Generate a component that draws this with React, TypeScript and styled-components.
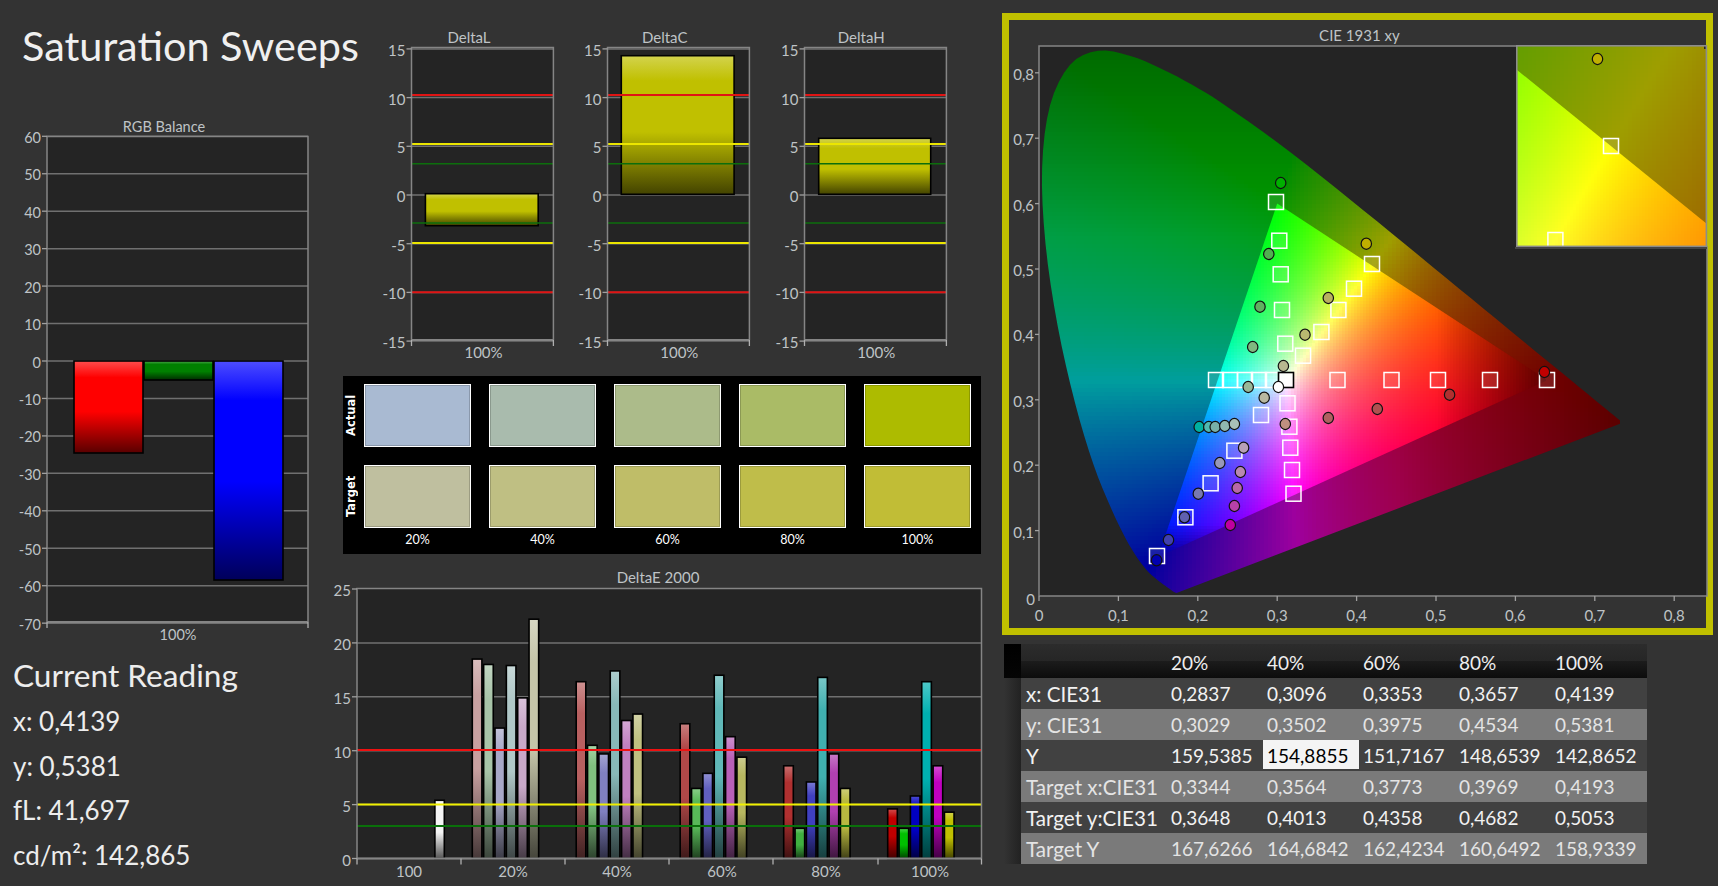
import React from 'react';
import styled, {createGlobalStyle} from 'styled-components';

const GlobalStyle = createGlobalStyle`
  html, body {
    margin: 0;
    padding: 0;
    background: #333333;
  }
  body {
    font-family: Lato, "Open Sans", sans-serif;
    color: #eeeeee;
  }
`;

// colour helpers
const mix = (hex: string, target: string, t: number) => {
  const parse = (h: string) => [1, 3, 5].map(i => parseInt(h.slice(i, i + 2), 16));
  const a = parse(hex);
  const b = parse(target);
  const out = a.map((v, i) => Math.round(v + (b[i] - v) * t));
  return `rgb(${out.join(',')})`;
};

const barStops = (color: string): [number, string][] => [
  [0, mix(color, '#ffffff', 0.3)],
  [0.18, color],
  [0.55, color],
  [1, mix(color, '#000000', 0.65)],
];

type Bar = {x0: number; x1: number; y0: number; y1: number; color: string};
type Line = {y: number; color: string; width?: number};

type ChartProps = {
  id: string;
  frame: [number, number, number, number];
  plot: {left: number; right: number; top: number; bottom: number};
  title: string;
  titleAt: [number, number];
  yTicks: {label: string; y: number}[];
  xLabels: {label: string; x: number}[];
  xTicks: number[];
  xLabelY: number;
  grid: number[];
  bars: Bar[];
  limits?: Line[];
  size: number;
};

const Chart = ({
  id,
  frame,
  plot,
  title,
  titleAt,
  yTicks,
  xLabels,
  xTicks,
  xLabelY,
  grid,
  bars,
  limits = [],
  size,
}: ChartProps) => (
  <ChartSvg
    width={frame[2]}
    height={frame[3]}
    viewBox={frame.join(' ')}
    style={{fontSize: size}}
  >
    <defs>
      {bars.map((bar, i) => (
        <linearGradient id={`${id}-${i}`} key={i} x1="0" y1="0" x2="0" y2="1">
          {barStops(bar.color).map(([offset, color]) => (
            <stop key={offset} offset={offset} stopColor={color} />
          ))}
        </linearGradient>
      ))}
    </defs>
    <text x={titleAt[0]} y={titleAt[1]} textAnchor="middle" dominantBaseline="central">
      {title}
    </text>
    <rect
      x={plot.left}
      y={plot.top}
      width={plot.right - plot.left}
      height={plot.bottom - plot.top}
      fill="#242424"
    />
    {grid.map(y => (
      <line key={y} x1={plot.left} x2={plot.right} y1={y} y2={y} stroke="#707070" strokeWidth="1.5" />
    ))}
    {bars.map((bar, i) => (
      <rect
        key={i}
        x={bar.x0}
        y={bar.y0}
        width={bar.x1 - bar.x0}
        height={bar.y1 - bar.y0}
        fill={`url(#${id}-${i})`}
        stroke="#000000"
        strokeWidth="1.6"
      />
    ))}
    {limits.map(line => (
      <line
        key={line.y}
        x1={plot.left}
        x2={plot.right}
        y1={line.y}
        y2={line.y}
        stroke={line.color}
        strokeWidth={line.width ?? 2}
      />
    ))}
    <path
      d={`M${plot.left} ${plot.bottom}V${plot.top}H${plot.right}V${plot.bottom}`}
      fill="none"
      stroke="#858585"
      strokeWidth="1.5"
    />
    <line x1={plot.left} x2={plot.right} y1={plot.bottom} y2={plot.bottom} stroke="#858585" strokeWidth="2" />
    {yTicks.map(tick => (
      <g key={tick.label}>
        <line x1={plot.left - 5} x2={plot.left} y1={tick.y} y2={tick.y} stroke="#a0a0a0" strokeWidth="1.3" />
        <text x={plot.left - 6} y={tick.y + 1} textAnchor="end" dominantBaseline="central">
          {tick.label}
        </text>
      </g>
    ))}
    {xTicks.map(x => (
      <line key={x} x1={x} x2={x} y1={plot.bottom} y2={plot.bottom + 6} stroke="#b0b0b0" strokeWidth="1.3" />
    ))}
    {xLabels.map(item => (
      <text key={item.x} x={item.x} y={xLabelY} textAnchor="middle" dominantBaseline="central">
        {item.label}
      </text>
    ))}
  </ChartSvg>
);

// RGB balance
const rgbY = (v: number) => 361 - v * 3.745;
const rgbTicks = [60, 50, 40, 30, 20, 10, 0, -10, -20, -30, -40, -50, -60, -70];

// Delta L/C/H
const deltaY = (v: number) => 195 - v * 9.74;
const deltaTicks = [15, 10, 5, 0, -5, -10, -15];
const deltaLimits: Line[] = [
  {y: 95, color: '#e01414'},
  {y: 144, color: '#ece600'},
  {y: 163.7, color: '#0c6e0c', width: 1.5},
  {y: 223, color: '#0c6e0c', width: 1.5},
  {y: 243, color: '#ece600'},
  {y: 292.3, color: '#e01414'},
];
const deltaCharts = [
  {name: 'DeltaL', shift: 0, titleX: 469, labelX: 483.5, x0: 425.4, x1: 538.2, y0: 193.7, y1: 225.7},
  {name: 'DeltaC', shift: 196.3, titleX: 665, labelX: 679.6, x0: 621.6, x1: 734.4, y0: 55.7, y1: 194.3},
  {name: 'DeltaH', shift: 392.8, titleX: 861, labelX: 876, x0: 818.5, x1: 930.5, y0: 138.3, y1: 194.3},
];

// DeltaE 2000
const deltaEY = (v: number) => 858.5 - v * 10.78;
const deltaEGroups = [
  {
    start: 472.3,
    values: [18.5, 18.0, 12.1, 17.9, 14.9, 22.2],
    colors: ['#c8a0a0', '#a8c4a8', '#a8a8c8', '#b0c8c8', '#c8a8c8', '#c4c4a8'],
  },
  {
    start: 576.2,
    values: [16.4, 10.5, 9.7, 17.4, 12.8, 13.4],
    colors: ['#b86060', '#80c080', '#8080c0', '#88b8b8', '#c080c0', '#c0c080'],
  },
  {
    start: 680.2,
    values: [12.5, 6.5, 7.9, 17.0, 11.3, 9.4],
    colors: ['#b04848', '#58b858', '#6060c0', '#60b8b8', '#b860b8', '#b8b860'],
  },
  {
    start: 783.7,
    values: [8.6, 2.8, 7.1, 16.8, 9.7, 6.5],
    colors: ['#b03030', '#40b040', '#4040c0', '#40b0b0', '#b040b0', '#b8b840'],
  },
  {
    start: 887.7,
    values: [4.6, 2.8, 5.8, 16.4, 8.6, 4.3],
    colors: ['#c00000', '#00c000', '#0000c0', '#00b0b0', '#c000c0', '#c0c000'],
  },
];
const deltaEBars: Bar[] = [
  {x0: 434.9, x1: 444.3, y0: deltaEY(5.4), y1: deltaEY(0), color: '#f4f4f4'},
  ...deltaEGroups.flatMap(group =>
    group.values.map((v, i) => ({
      x0: group.start + i * 11.35,
      x1: group.start + i * 11.35 + 9.6,
      y0: deltaEY(v),
      y1: deltaEY(0),
      color: group.colors[i],
    })),
  ),
];

// CIE 1931 diagram
const cieX = (x: number) => 1039 + x * 794;
const cieY = (y: number) => 596 - y * 654;
const insetX = (x: number) => 1611 + (x - 0.4193) * 2482;
const insetY = (y: number) => 146 - (y - 0.5053) * 2534;

const locusKnots: [number, number][] = [
  [0.1741, 0.005], [0.1726, 0.0048], [0.1689, 0.0069], [0.1644, 0.0109], [0.1566, 0.0177],
  [0.144, 0.0297], [0.1355, 0.0399], [0.1241, 0.0578], [0.1096, 0.0868], [0.0913, 0.1327],
  [0.0687, 0.2007], [0.0454, 0.295], [0.0235, 0.4127], [0.0082, 0.5384], [0.0039, 0.6548],
  [0.0139, 0.7502], [0.0389, 0.812], [0.0743, 0.8338], [0.1142, 0.8262], [0.1547, 0.8059],
  [0.1929, 0.7816], [0.2296, 0.7543], [0.3016, 0.6923], [0.3731, 0.6245], [0.4441, 0.5547],
  [0.5125, 0.4866], [0.5752, 0.4242], [0.627, 0.3725], [0.6658, 0.334], [0.6915, 0.3083],
  [0.719, 0.2809], [0.7347, 0.2653],
];

// the tabulated locus looks faceted at this size, so round it off
const locus: [number, number][] = locusKnots.flatMap((p1, i) => {
  const p0 = locusKnots[Math.max(i - 1, 0)];
  const p2 = locusKnots[Math.min(i + 1, locusKnots.length - 1)];
  const p3 = locusKnots[Math.min(i + 2, locusKnots.length - 1)];
  return [0, 0.25, 0.5, 0.75].map(t => {
    const spline = (a: number, b: number, c: number, d: number) =>
      0.5 *
      (2 * b +
        (c - a) * t +
        (2 * a - 5 * b + 4 * c - d) * t * t +
        (3 * b - a - 3 * c + d) * t * t * t);
    return [spline(p0[0], p1[0], p2[0], p3[0]), spline(p0[1], p1[1], p2[1], p3[1])] as [number, number];
  });
});

const gamut: [number, number][] = [
  [0.64, 0.33],
  [0.3, 0.6],
  [0.15, 0.06],
];

const toPoints = (
  list: [number, number][],
  mapX: (x: number) => number,
  mapY: (y: number) => number,
) => list.map(([x, y]) => `${mapX(x)},${mapY(y)}`).join(' ');

const inside = (list: [number, number][], x: number, y: number) => {
  let hit = false;
  for (let i = 0, j = list.length - 1; i < list.length; j = i++) {
    const [xi, yi] = list[i];
    const [xj, yj] = list[j];
    if (yi > y !== yj > y && x < ((xj - xi) * (y - yi)) / (yj - yi) + xi) {
      hit = !hit;
    }
  }
  return hit;
};

const chroma = (x: number, y: number, bright: boolean) => {
  const safeY = Math.max(y, 0.004);
  const X = x / safeY;
  const Z = (1 - x - safeY) / safeY;
  const linear = [
    3.2406 * X - 1.5372 - 0.4986 * Z,
    -0.9689 * X + 1.8758 + 0.0415 * Z,
    0.0557 * X - 0.204 + 1.057 * Z,
  ].map(v => Math.max(v, 0));
  const top = Math.max(...linear, 0.0001);
  let shade = 1;
  if (bright) {
    shade -= Math.max(0, (x - 0.5) / 0.14) * 0.65;
    shade -= Math.max(0, (0.11 - y) / 0.05) * 0.4;
  } else {
    shade = 0.62;
    shade -= (Math.max(0, y - 0.55) / 0.28) * 0.2;
    shade -= (Math.max(0, x - 0.45) / 0.28) * 0.26;
  }
  const curve = bright ? 1 : 1 / 1.3;
  const rgb = linear.map(v => Math.round(255 * shade * Math.pow(v / top, curve)));
  return `rgb(${rgb.join(',')})`;
};

type Cell = {px: number; py: number; fill: string};

const fillCells = (
  list: [number, number][],
  bright: boolean,
  step: number,
  box: [number, number, number, number],
  fromX: (px: number) => number,
  fromY: (py: number) => number,
) => {
  const cells: Cell[] = [];
  for (let py = box[1]; py < box[3]; py += step) {
    for (let px = box[0]; px < box[2]; px += step) {
      const corners = [
        [px, py],
        [px + step, py],
        [px, py + step],
        [px + step, py + step],
      ];
      if (corners.some(([a, b]) => inside(list, fromX(a), fromY(b)))) {
        const x = fromX(px + step / 2);
        const y = fromY(py + step / 2);
        cells.push({px, py, fill: chroma(x, y, bright)});
      }
    }
  }
  return cells;
};

const plotFromX = (px: number) => (px - 1039) / 794;
const plotFromY = (py: number) => (596 - py) / 654;
const smallFromX = (px: number) => (px - 1611) / 2482 + 0.4193;
const smallFromY = (py: number) => (146 - py) / 2534 + 0.5053;

const outerCells = fillCells(locus, false, 4, [1040, 44, 1628, 596], plotFromX, plotFromY);
const innerCells = fillCells(gamut, true, 3, [1150, 196, 1556, 566], plotFromX, plotFromY);
const insetBox: [number, number, number, number] = [1516, 45, 1708, 248];
const insetOuter = fillCells(locus, false, 4, insetBox, smallFromX, smallFromY);
const insetInner = fillCells(gamut, true, 3, insetBox, smallFromX, smallFromY);

const targetSquares: [number, number][] = [
  [1216, 380], [1230, 380], [1245, 380], [1259, 380], [1273, 380],
  [1337.5, 380], [1391.5, 380], [1438, 380], [1490, 380], [1547, 380],
  [1261, 415], [1287.5, 403.3], [1289.4, 426.7], [1290.3, 447.7], [1292, 470], [1293.5, 493.7],
  [1234.4, 450.7], [1210.6, 483.3], [1185.4, 517.3], [1157, 556],
  [1303, 355.7], [1321.4, 332], [1285.3, 343.7], [1282, 310], [1338.4, 310],
  [1354, 288.7], [1372, 264], [1279.3, 240.7], [1280.7, 274.3], [1276, 202],
];

const readings: [number, number, string][] = [
  [1544.4, 372, '#c00000'], [1449.6, 394.7, '#b03030'], [1377.3, 409, '#b05050'],
  [1328.3, 418, '#b06060'], [1285.3, 424, '#c09080'],
  [1199.2, 427, '#00b0a0'], [1208.8, 427, '#50b8b0'], [1215.2, 427, '#78b0a8'],
  [1224.8, 426, '#90b8b0'], [1234.4, 424, '#a8c0b8'],
  [1156.6, 560.3, '#0000b0'], [1168.5, 540, '#4040b0'], [1184.5, 517.3, '#6060b0'],
  [1198.3, 493.7, '#7878b0'], [1219.8, 463, '#9898b8'],
  [1230.3, 525, '#c000a0'], [1234.4, 506, '#b840a8'], [1237.2, 488, '#b868a8'],
  [1240.4, 472, '#b888b0'], [1243.6, 447.7, '#b8a0b8'],
  [1366.3, 243.7, '#c0b000'], [1328.3, 298, '#b8b060'], [1305, 334.7, '#b8b870'],
  [1283.4, 366, '#b8b890'], [1264.2, 397.7, '#b8b8a0'],
  [1280.7, 183, '#00b000'], [1268.8, 254, '#50b050'], [1260, 306.7, '#60b060'],
  [1252.7, 347, '#80b880'], [1248.2, 387, '#98b898'],
  [1278.4, 387, '#ffffff'],
];

const Marker = ({at}: {at: [number, number]}) => (
  <rect
    x={at[0] - 7.5}
    y={at[1] - 7.5}
    width={15}
    height={15}
    fill="rgba(255,255,255,0.1)"
    stroke="#ffffff"
    strokeWidth="1.5"
  />
);

const Reading = ({at}: {at: [number, number, string]}) => (
  <ellipse cx={at[0]} cy={at[1]} rx={5.2} ry={5.6} fill={at[2]} stroke="#111111" strokeWidth="1.2" />
);

const CieDiagram = () => {
  const xTicks = [0, 0.1, 0.2, 0.3, 0.4, 0.5, 0.6, 0.7, 0.8];
  const yTicks = [0.1, 0.2, 0.3, 0.4, 0.5, 0.6, 0.7, 0.8];
  const comma = (v: number) => (v === 0 ? '0' : v.toFixed(1).replace('.', ','));
  return (
    <ChartSvg width={698} height={608} viewBox="1009 20 698 608" style={{fontSize: 15}}>
      <defs>
        <clipPath id="locus">
          <polygon points={toPoints(locus, cieX, cieY)} />
        </clipPath>
        <clipPath id="gamut">
          <polygon points={toPoints(gamut, cieX, cieY)} />
        </clipPath>
        <clipPath id="inset-area">
          <rect x={1517} y={46} width={190} height={200} />
        </clipPath>
        <clipPath id="inset-gamut">
          <polygon points={toPoints(gamut, insetX, insetY)} />
        </clipPath>
      </defs>
      <text x={1359.4} y={35} textAnchor="middle" dominantBaseline="central">
        CIE 1931 xy
      </text>
      <rect x={1039} y={46} width={668} height={550} fill="#242424" />
      <g clipPath="url(#locus)" shapeRendering="crispEdges">
        {outerCells.map(cell => (
          <rect key={`${cell.px}-${cell.py}`} x={cell.px} y={cell.py} width={4} height={4} fill={cell.fill} />
        ))}
      </g>
      <g clipPath="url(#gamut)" shapeRendering="crispEdges">
        {innerCells.map(cell => (
          <rect key={`${cell.px}-${cell.py}`} x={cell.px} y={cell.py} width={3} height={3} fill={cell.fill} />
        ))}
      </g>
      <path d="M1039 596V46H1517M1707 246V596H1039" fill="none" stroke="#858585" strokeWidth="1.5" />
      {yTicks.map(v => (
        <g key={v}>
          <line x1={1035} x2={1039} y1={cieY(v)} y2={cieY(v)} stroke="#a0a0a0" strokeWidth="1.3" />
          <text x={1034} y={cieY(v) + 1} textAnchor="end" dominantBaseline="central">
            {comma(v)}
          </text>
        </g>
      ))}
      <text x={1035} y={599} textAnchor="end" dominantBaseline="central">
        0
      </text>
      {xTicks.map(v => (
        <g key={v}>
          <line x1={cieX(v)} x2={cieX(v)} y1={596} y2={601} stroke="#a0a0a0" strokeWidth="1.3" />
          <text x={cieX(v)} y={615} textAnchor="middle" dominantBaseline="central">
            {comma(v)}
          </text>
        </g>
      ))}
      {targetSquares.map(square => (
        <Marker key={square.join()} at={square} />
      ))}
      <rect x={1278.5} y={372.5} width={15} height={15} fill="rgba(255,255,255,0.85)" stroke="#000000" strokeWidth="1.6" />
      {readings.map(item => (
        <Reading key={item.join()} at={item} />
      ))}
      <g clipPath="url(#inset-area)">
        <g shapeRendering="crispEdges">
          {insetOuter.map(cell => (
            <rect key={`${cell.px}-${cell.py}`} x={cell.px} y={cell.py} width={4} height={4} fill={cell.fill} />
          ))}
        </g>
        <g clipPath="url(#inset-gamut)" shapeRendering="crispEdges">
          {insetInner.map(cell => (
            <rect key={`${cell.px}-${cell.py}`} x={cell.px} y={cell.py} width={3} height={3} fill={cell.fill} />
          ))}
        </g>
        <Marker at={[1611, 146]} />
        <Marker at={[1555.4, 240]} />
        <Reading at={[1597.5, 59, '#c0b000']} />
      </g>
      <rect x={1516.8} y={45.8} width={189.6} height={200.6} fill="none" stroke="#8c8c8c" strokeWidth="1.6" />
      <rect x={1515} y={247} width={192} height={2} fill="#454545" />
    </ChartSvg>
  );
};

const swatchRows = [
  {label: 'Actual', colors: ['#a9bad2', '#a9bbad', '#acbb8a', '#aabb66', '#adbb00']},
  {label: 'Target', colors: ['#bfbf9f', '#bfbf83', '#bfbd68', '#bfbd4a', '#c1bd36']},
];
const swatchLabels = ['20%', '40%', '60%', '80%', '100%'];

const tableRows = [
  {name: 'x: CIE31', values: ['0,2837', '0,3096', '0,3353', '0,3657', '0,4139']},
  {name: 'y: CIE31', values: ['0,3029', '0,3502', '0,3975', '0,4534', '0,5381']},
  {name: 'Y', values: ['159,5385', '154,8855', '151,7167', '148,6539', '142,8652']},
  {name: 'Target x:CIE31', values: ['0,3344', '0,3564', '0,3773', '0,3969', '0,4193']},
  {name: 'Target y:CIE31', values: ['0,3648', '0,4013', '0,4358', '0,4682', '0,5053']},
  {name: 'Target Y', values: ['167,6266', '164,6842', '162,4234', '160,6492', '158,9339']},
];

const App = () => {
  return (
    <Page>
      <GlobalStyle />
      <LeftColumn>
        <Title>Saturation Sweeps</Title>
        <Chart
          id="rgb"
          frame={[0, 115, 342, 530]}
          plot={{left: 47, right: 308, top: 136.5, bottom: 622}}
          title="RGB Balance"
          titleAt={[164, 126]}
          yTicks={rgbTicks.map(v => ({label: `${v}`, y: rgbY(v)}))}
          xLabels={[{label: '100%', x: 178}]}
          xTicks={[47, 308]}
          xLabelY={634}
          grid={rgbTicks.map(rgbY)}
          size={14.5}
          bars={[
            {x0: 74, x1: 143, y0: 361, y1: 453, color: '#ff0000'},
            {x0: 144, x1: 213, y0: 361, y1: 380, color: '#008000'},
            {x0: 214, x1: 283, y0: 361, y1: 580, color: '#0000ff'},
          ]}
        />
        <ReadingBlock>
          <ReadingTitle>Current Reading</ReadingTitle>
          <ReadingLine>x: 0,4139</ReadingLine>
          <ReadingLine>y: 0,5381</ReadingLine>
          <ReadingLine>fL: 41,697</ReadingLine>
          <ReadingLine>cd/m²: 142,865</ReadingLine>
        </ReadingBlock>
      </LeftColumn>

      <MiddleColumn>
        <DeltaRow>
          {deltaCharts.map(chart => {
            const left = 411.5 + chart.shift;
            const right = 553.4 + chart.shift;
            return (
              <Chart
                key={chart.name}
                id={chart.name}
                frame={[355 + chart.shift, 26, 196, 336]}
                plot={{left, right, top: 47.5, bottom: 340}}
                title={chart.name}
                titleAt={[chart.titleX, 37]}
                yTicks={deltaTicks.map(v => ({label: `${v}`, y: deltaY(v)}))}
                xLabels={[{label: '100%', x: chart.labelX}]}
                xTicks={[left, right]}
                xLabelY={352}
                grid={deltaTicks.map(deltaY)}
                size={15}
                limits={deltaLimits}
                bars={[{x0: chart.x0, x1: chart.x1, y0: chart.y0, y1: chart.y1, color: '#c0c000'}]}
              />
            );
          })}
        </DeltaRow>

        <SwatchPanel>
          {swatchRows.map(row => (
            <SwatchRow key={row.label}>
              <SideLabel>{row.label}</SideLabel>
              {row.colors.map(color => (
                <Swatch key={color} $color={color} />
              ))}
            </SwatchRow>
          ))}
          <SwatchCaptions>
            {swatchLabels.map(label => (
              <span key={label}>{label}</span>
            ))}
          </SwatchCaptions>
        </SwatchPanel>

        <Chart
          id="deltaE"
          frame={[342, 566, 660, 316]}
          plot={{left: 357, right: 981.5, top: 588.5, bottom: 858.5}}
          title="DeltaE 2000"
          titleAt={[658, 577]}
          yTicks={[25, 20, 15, 10, 5, 0].map(v => ({label: `${v}`, y: deltaEY(v)}))}
          xLabels={[
            {label: '100', x: 409},
            {label: '20%', x: 513},
            {label: '40%', x: 617},
            {label: '60%', x: 722},
            {label: '80%', x: 826},
            {label: '100%', x: 930},
          ]}
          xTicks={[357, 461, 565, 669, 773, 878, 981.5]}
          xLabelY={871}
          grid={[20, 15, 10, 5, 0].map(deltaEY)}
          size={15}
          limits={[
            {y: 750, color: '#ee1111'},
            {y: 804.5, color: '#f0f000'},
            {y: 826, color: '#0a700a'},
          ]}
          bars={deltaEBars}
        />
      </MiddleColumn>

      <RightColumn>
        <CiePanel>
          <CieDiagram />
        </CiePanel>
        <DataTable>
          <thead>
            <tr>
              <CornerCell />
              <HeadCell />
              {swatchLabels.map(label => (
                <HeadCell key={label}>{label}</HeadCell>
              ))}
            </tr>
          </thead>
          <tbody>
            {tableRows.map((row, r) => (
              <BodyRow key={row.name} $light={r % 2 === 1}>
                <RowHeader />
                <NameCell>{row.name}</NameCell>
                {row.values.map((value, c) => (
                  <ValueCell key={value} $selected={r === 2 && c === 1}>
                    {value}
                  </ValueCell>
                ))}
              </BodyRow>
            ))}
          </tbody>
        </DataTable>
      </RightColumn>
    </Page>
  );
};

export default App;

const Page = styled.div`
  width: 1718px;
  height: 886px;
  overflow: hidden;
  display: grid;
  grid-template-columns: 342px 660px 716px;
  background: #333333;
`;

const LeftColumn = styled.div`
  display: flex;
  flex-direction: column;
`;

const Title = styled.h1`
  margin: 0;
  height: 115px;
  padding: 21px 0 0 22px;
  box-sizing: border-box;
  font-size: 41.4px;
  line-height: 48px;
  font-weight: 400;
  color: #f0f0f0;
  white-space: nowrap;
`;

const ChartSvg = styled.svg`
  display: block;
  flex: none;
  font-family: Lato, "Open Sans", sans-serif;
  overflow: visible;

  text {
    fill: #bfc3c6;
  }
`;

const ReadingBlock = styled.div`
  padding: 8px 0 0 13px;
`;

const ReadingTitle = styled.div`
  font-size: 31.6px;
  line-height: 44px;
  height: 46px;
  color: #ededed;
`;

const ReadingLine = styled.div`
  font-size: 26px;
  line-height: 44.6px;
  color: #ededed;
`;

const MiddleColumn = styled.div`
  display: flex;
  flex-direction: column;
  padding-top: 26px;
`;

const DeltaRow = styled.div`
  display: flex;
  gap: 0.3px;
  padding-left: 13px;
  height: 350px;
`;

const SwatchPanel = styled.div`
  width: 638px;
  height: 178px;
  margin: 0 0 12px 1px;
  background: #000000;
  padding-top: 8px;
  box-sizing: border-box;
`;

const SwatchRow = styled.div`
  display: flex;
  gap: 18px;
  height: 63px;
  margin-bottom: 17.6px;
  padding-left: 21px;
  position: relative;
`;

const SideLabel = styled.span`
  position: absolute;
  left: 1px;
  top: 0;
  height: 63px;
  writing-mode: vertical-rl;
  transform: rotate(180deg);
  text-align: center;
  font-family: "DejaVu Sans", sans-serif;
  font-size: 11.5px;
  font-weight: 700;
  line-height: 15px;
  color: #ffffff;
`;

const Swatch = styled.div<{$color: string}>`
  width: 107px;
  height: 63px;
  box-sizing: border-box;
  background: ${p => p.$color};
  border: 1px solid #ffffff;
  box-shadow: inset 0 0 0 1px rgba(0, 0, 0, 0.18);
`;

const SwatchCaptions = styled.div`
  display: flex;
  gap: 18px;
  padding-left: 21px;
  margin-top: -15px;
  font-size: 12.5px;
  line-height: 20px;
  color: #ffffff;

  span {
    width: 107px;
    text-align: center;
  }
`;

const RightColumn = styled.div`
  display: flex;
  flex-direction: column;
  padding-top: 13px;
`;

const CiePanel = styled.div`
  width: 711px;
  height: 622px;
  box-sizing: border-box;
  border: 7px solid #c0c000;
  background: #333333;
`;

const DataTable = styled.table`
  margin: 9px 0 0 2px;
  width: 642px;
  table-layout: fixed;
  border-collapse: collapse;
  font-size: 19px;

  th,
  td {
    box-sizing: border-box;
  }
`;

const CornerCell = styled.th`
  width: 17px;
  height: 34px;
  padding: 0;
  background: linear-gradient(#000000, #050505);
`;

const HeadCell = styled.th`
  width: 96px;
  padding: 3px 0 0 4px;
  height: 34px;
  text-align: left;
  font-weight: 400;
  color: #eeeeee;
  background: linear-gradient(#2c2c2c 0%, #262626 50%, #1c1c1c 50%, #0c0c0c 100%);

  &:nth-child(2) {
    width: 146px;
    padding: 0;
  }
`;

const BodyRow = styled.tr<{$light: boolean}>`
  height: 31px;
  background: ${p => (p.$light ? '#7a7a7a' : '#414141')};
  color: ${p => (p.$light ? '#e4e4e4' : '#f2f2f2')};
`;

const RowHeader = styled.td`
  padding: 0;
  background: linear-gradient(90deg, #333333, #222222);
`;

const NameCell = styled.td`
  padding: 0 0 0 5px;
  font-size: 20.6px;
  white-space: nowrap;
`;

const ValueCell = styled.td<{$selected: boolean}>`
  padding: 0 0 0 4px;
  white-space: nowrap;
  ${p =>
    p.$selected
      ? `background: linear-gradient(#f4f4f4 29px, transparent 29px); color: #000000;`
      : ''}
`;
